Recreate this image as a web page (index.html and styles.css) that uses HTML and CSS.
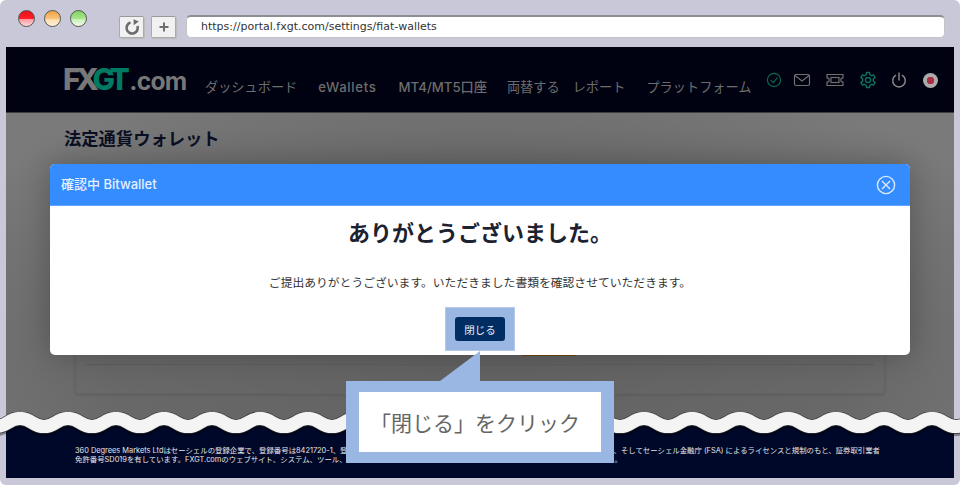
FILE: index.html
```html
<!DOCTYPE html>
<html lang="ja">
<head>
    <meta charset="UTF-8">
    <title>法定通貨ウォレット</title>
    <link rel="stylesheet" href="styles.css">
</head>
<body>
    <div class="window">
        <div class="toolbar">
            <div class="dots">
                <span class="dot dot-red"></span>
                <span class="dot dot-orange"></span>
                <span class="dot dot-green"></span>
            </div>
            <div class="tool-btn">
                <svg width="18" height="18" viewBox="0 0 18 18" fill="none" stroke="#6b6b6b" stroke-width="2.6">
                    <path d="M7.5 4.6 A5.6 5.6 0 1 0 14.4 8"/>
                    <path d="M10.6 1.2 V7.2 L15.8 3.6 Z" fill="#6b6b6b" stroke="none"/>
                </svg>
            </div>
            <div class="tool-btn">
                <svg width="12" height="12" viewBox="0 0 12 12" stroke="#6e6e6e" stroke-width="2">
                    <path d="M6 1.5 V10.5 M1.5 6 H10.5"/>
                </svg>
            </div>
            <div class="address">https://portal.fxgt.com/settings/fiat-wallets</div>
        </div>

        <div class="page">
            <div class="site-header">
                <div class="logo"><span class="logo-mark">FX<span class="logo-green">GT</span></span>.com</div>
                <nav class="nav">
                    <a class="nav-dash">ダッシュボード</a>
                    <a class="nav-ewallet">eWallets</a>
                    <a class="nav-mt">MT4/MT5口座</a>
                    <a class="nav-ex">両替する</a>
                    <a class="nav-report">レポート</a>
                    <a>プラットフォーム</a>
                </nav>
                <div class="header-icons">
                    <svg class="icon-check" width="16" height="16" viewBox="0 0 16 16" fill="none" stroke="#0b6a4c" stroke-width="1.1">
                        <circle cx="8" cy="8" r="6.6"/>
                        <path d="M4.8 8.2 L7.2 10.6 L11.4 5.6"/>
                    </svg>
                    <svg width="18" height="14" viewBox="0 0 18 14" fill="none" stroke="#707070" stroke-width="1.2">
                        <rect x="1.5" y="1.5" width="15" height="11" rx="1.5"/>
                        <path d="M2 2.5 L9 8 L16 2.5"/>
                    </svg>
                    <svg width="20" height="14" viewBox="0 0 20 14" fill="none" stroke="#707070" stroke-width="1.2">
                        <path d="M2 1.5 H18 V4.8 A2.2 2.2 0 0 0 18 9.2 V12.5 H2 V9.2 A2.2 2.2 0 0 0 2 4.8 Z"/>
                        <rect x="6" y="4.5" width="8" height="5"/>
                    </svg>
                    <svg width="18" height="18" viewBox="0 0 24 24" fill="none" stroke="#0b6f60" stroke-width="1.9" stroke-linejoin="round">
                        <circle cx="12" cy="12" r="3.4"/>
                        <path d="M10.2 2 H13.8 L14.4 5 L16.7 6.3 L19.6 5.3 L21.4 8.5 L19.1 10.5 V13.5 L21.4 15.5 L19.6 18.7 L16.7 17.7 L14.4 19 L13.8 22 H10.2 L9.6 19 L7.3 17.7 L4.4 18.7 L2.6 15.5 L4.9 13.5 V10.5 L2.6 8.5 L4.4 5.3 L7.3 6.3 L9.6 5 Z"/>
                    </svg>
                    <svg width="16" height="17" viewBox="0 0 16 17" fill="none" stroke="#8a8a8a" stroke-width="1.4" stroke-linecap="round">
                        <path d="M8 1 V8"/>
                        <path d="M4.6 3.4 A6.3 6.3 0 1 0 11.4 3.4"/>
                    </svg>
                    <span class="record"></span>
                </div>
            </div>

            <div class="content">
                <h1 class="page-title">法定通貨ウォレット</h1>
                <div class="back-card">
                    <div class="back-btn"></div>
                    <div class="back-line"></div>
                </div>
            </div>

            <div class="footer">
                <div class="footer-line">
                    <span>360 Degrees Markets Ltdはセーシェルの登録企業で、登録番号は8421720-1、登</span>
                    <span>、そしてセーシェル金融庁 (FSA) によるライセンスと規制のもと、証券取引業者</span>
                </div>
                <div class="footer-line">
                    <span>免許番号SD019を有しています。FXGT.comのウェブサイト、システム、ツール、</span>
                    <span class="footer-end">。</span>
                </div>
            </div>
        </div>

        <svg class="tear" width="960" height="30" viewBox="0 0 960 30" fill="none">
            <defs>
                <path id="wave" d="M-48 10.5 q12 8 24 0 t24 0 t24 0 t24 0 t24 0 t24 0 t24 0 t24 0 t24 0 t24 0 t24 0 t24 0 t24 0 t24 0 t24 0 t24 0 t24 0 t24 0 t24 0 t24 0 t24 0 t24 0 t24 0 t24 0 t24 0 t24 0 t24 0 t24 0 t24 0 t24 0 t24 0 t24 0 t24 0 t24 0 t24 0 t24 0 t24 0 t24 0 t24 0 t24 0 t24 0 t24 0 t24 0 t24 0 t24 0"/>
            </defs>
            <use href="#wave" x="-16" y="1.5" stroke="#000" stroke-opacity="0.35" stroke-width="16"/>
            <use href="#wave" x="-16" stroke="#333" stroke-width="14.5"/>
            <use href="#wave" x="-16" stroke="#f4f4f4" stroke-width="13"/>
        </svg>

        <div class="modal">
            <div class="modal-head">
                <span>確認中 Bitwallet</span>
                <svg width="20" height="20" viewBox="0 0 20 20" fill="none" stroke="#dbe9ff" stroke-width="1.4">
                    <circle cx="10" cy="10" r="8.6"/>
                    <path d="M6 6 L14 14 M14 6 L6 14"/>
                </svg>
            </div>
            <div class="modal-body">
                <h2 class="modal-title">ありがとうございました。</h2>
                <p class="modal-text">ご提出ありがとうございます。いただきました書類を確認させていただきます。</p>
                <div class="highlight">
                    <button class="close-btn">閉じる</button>
                </div>
            </div>
        </div>

        <div class="callout">「閉じる」をクリック</div>
    </div>
</body>
</html>
```

FILE: styles.css
```css
:root {
    --chrome: #c8c8d8;
    --header: #000211;
    --footer: #00082a;
    --blue: #348cff;
    --callout: #9ab6e3;
    --font: 'Noto Sans CJK JP', 'Noto Sans', sans-serif;
    --latin: 'Inter', 'Noto Sans CJK JP', sans-serif;
}

* {
    margin: 0;
    padding: 0;
    box-sizing: border-box;
}

html, body {
    width: 960px;
    height: 487px;
    overflow: hidden;
    background: #fff;
}

body {
    font-family: var(--font);
}

.window {
    position: relative;
    width: 960px;
    height: 485px;
    padding: 0 6px 7px;
    background: var(--chrome);
    border-radius: 6px;
    display: flex;
    flex-direction: column;
    overflow: hidden;
}

/* browser bar */
.toolbar {
    height: 47px;
    flex: none;
    display: flex;
    align-items: flex-start;
    position: relative;
}

.dots {
    display: flex;
    gap: 9px;
    padding: 10px 0 0 12px;
    width: 113px;
}

.dot {
    width: 17px;
    height: 17px;
    border-radius: 50%;
    border: 1px solid #555;
}

.dot-red {
    background: linear-gradient(#e8101c 0, #ff1f28 50%, #ff9a9e 56%, #ffd9da 100%);
}

.dot-orange {
    background: linear-gradient(#eda544 0, #f6c27a 50%, #fbdca8 56%, #fff3df 100%);
}

.dot-green {
    background: linear-gradient(#7fd25f 0, #a6e58c 50%, #c8f0b8 56%, #effbe9 100%);
}

.tool-btn {
    width: 25px;
    height: 22px;
    margin: 16px 7px 0 0;
    display: flex;
    align-items: center;
    justify-content: center;
    background: #f1f1f1;
    border: 1px solid #aaa;
    border-top-color: #999;
    border-radius: 2px;
    box-shadow: 1px 1px 1px #bbb;
}

.address {
    width: 759px;
    height: 23px;
    margin: 15px 0 0 3px;
    padding-left: 14px;
    background: #fff;
    border: 1px solid #c4c4c4;
    border-top: 2px solid #8d8d93;
    border-radius: 5px;
    font: 11px/20px 'DejaVu Sans', sans-serif;
    color: #333;
}

/* site */
.page {
    flex: 1;
    display: flex;
    flex-direction: column;
    background: radial-gradient(ellipse 620px 300px at 50% 72%, #626262 0, #686868 60%, #7a7a7a 100%), #7a7a7a;
}

.site-header {
    height: 66px;
    flex: none;
    display: flex;
    padding-left: 59px;
    background: var(--header);
    border-bottom: 1px solid #3d3d42;
}

.logo {
    width: 142px;
    margin-left: -2px;
    padding-top: 16px;
    font: 700 24.6px/32px 'Inter', sans-serif;
    letter-spacing: -0.7px;
    color: #777;
    white-space: nowrap;
}

.logo-mark {
    font-size: 30px;
    font-weight: 800;
    letter-spacing: -4.6px;
    margin-right: 4px;
}

.logo-green {
    color: #007a62;
}

.nav {
    display: flex;
    padding-top: 30px;
    font-size: 13.2px;
    line-height: 20px;
    color: #6d6d6d;
    white-space: nowrap;
}

.nav-dash { margin-right: 21px; }
.nav-ewallet { margin-right: 22px; font-family: var(--latin); font-weight: 500; letter-spacing: 0.65px; }
.nav-mt { margin-right: 20px; font-family: var(--latin); font-weight: 500; }
.nav-ex { margin-right: 13px; }
.nav-report { margin-right: 21px; }

.header-icons {
    position: absolute;
    top: 71px;
    left: 766px;
    display: flex;
    align-items: center;
    gap: 14px;
}

.icon-check {
    margin-right: -3px;
}

.record {
    width: 15px;
    height: 15px;
    margin-left: 2px;
    border-radius: 50%;
    background: radial-gradient(circle, #ac2f46 0 3.5px, #ababab 4px);
}

.content {
    flex: 1;
    padding: 13px 69px 0 58px;
    overflow: hidden;
}

.page-title {
    font-size: 17.3px;
    line-height: 24px;
    font-weight: 700;
    color: #0b0f24;
}

.back-card {
    height: 224px;
    margin: 20px 0 0 11px;
    border: 1px solid #636363;
    border-radius: 4px;
    box-shadow: 0 1px 3px rgba(0, 0, 0, 0.12);
    display: flex;
    flex-direction: column;
    justify-content: flex-end;
    padding: 0 10px 28px;
}

.back-btn {
    align-self: flex-end;
    width: 54px;
    height: 20px;
    margin: 0 298px 8px 0;
    background: #6b420e;
}

.back-line {
    border-top: 1px solid #5f5f5f;
}

.footer {
    height: 54px;
    flex: none;
    padding: 22px 74px 0 69px;
    background: var(--footer);
    color: #e6e6e6;
    font-family: var(--latin);
    font-size: 7.4px;
    line-height: 9px;
}

.footer-line {
    display: flex;
    justify-content: space-between;
    white-space: nowrap;
}

.footer-end {
    margin-right: 258px;
}

/* torn edge, lies over the page */
.tear {
    position: absolute;
    left: 0;
    top: 412px;
}

/* dialog */
.modal {
    position: absolute;
    left: 50px;
    top: 164px;
    width: 860px;
    height: 191px;
    background: #fff;
    border-radius: 5px;
    overflow: hidden;
    box-shadow: 0 0 30px rgba(0, 0, 0, 0.25);
}

.modal-head {
    height: 42px;
    padding: 0 14px 0 11px;
    display: flex;
    align-items: center;
    justify-content: space-between;
    background: var(--blue);
    border-bottom: 1px solid #62a6ff;
    color: #e4efff;
    font-family: var(--latin);
    font-size: 13px;
    font-weight: 500;
}

.modal-head span {
    margin-top: -2px;
}

.modal-body {
    display: flex;
    flex-direction: column;
    align-items: center;
}

.modal-title {
    margin-top: 10px;
    font-size: 22px;
    line-height: 30px;
    font-weight: 700;
    color: #1c2230;
}

.modal-text {
    margin-top: 27px;
    font-size: 11.8px;
    line-height: 18px;
    color: #333;
    white-space: nowrap;
}

.highlight {
    width: 70px;
    height: 44px;
    margin-top: 16px;
    display: flex;
    align-items: center;
    justify-content: center;
    background: var(--callout);
    border: 1px solid #b4c9ec;
}

.close-btn {
    width: 50px;
    height: 24px;
    border: none;
    border-radius: 3px;
    background: #002d62;
    color: #e8eef8;
    font-family: var(--font);
    font-size: 10.5px;
}

.callout {
    position: absolute;
    left: 346px;
    top: 381px;
    width: 268px;
    height: 82px;
    display: flex;
    align-items: center;
    justify-content: center;
    padding-right: 10px;
    background: #fff;
    border: solid var(--callout);
    border-width: 11px 13px;
    font-size: 21px;
    color: #666;
    white-space: nowrap;
}

.callout::before {
    content: '';
    position: absolute;
    left: 81px;
    top: -41px;
    border-left: 40px solid transparent;
    border-bottom: 30px solid var(--callout);
}
```
